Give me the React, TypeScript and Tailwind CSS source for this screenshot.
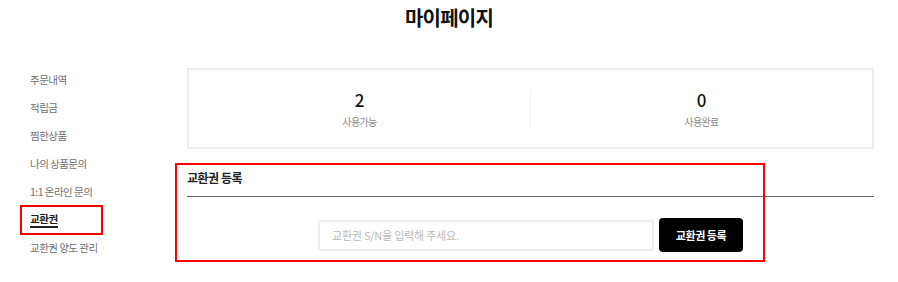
const menu = ["주문내역", "적립금", "찜한상품", "나의 상품문의", "1:1 온라인 문의", "교환권", "교환권 양도 관리"];

function StatBox({ value, label }: { value: string; label: string }) {
  return (
    <div className="flex-1 flex flex-col items-center">
      <p className="text-[17px] leading-[20px] font-medium text-[#111]">{value}</p>
      <p className="mt-[6px] text-[10px] leading-[12px] tracking-[-0.06em] text-[#888]">{label}</p>
    </div>
  );
}

export default function App() {
  return (
    <div
      className="w-[898px] h-[282px] bg-white overflow-hidden"
      style={{ fontFamily: '"Noto Sans CJK KR", "Noto Sans", sans-serif' }}
    >
      <h1 className="pt-[4px] text-center text-[20px] leading-[28px] font-bold tracking-[-0.04em] text-[#111]">
        마이페이지
      </h1>

      <div className="flex mt-[36px]">
        <aside className="w-[187px] pl-[30px] -mt-[2px]">
          <ul className="flex flex-col">
            {menu.map((m) => {
              const active = m === "교환권";
              return (
                <li key={m} className="h-[28px] flex items-center">
                  {active ? (
                    <span className="-ml-[10px] w-[83px] h-[30px] border-2 border-[#ff0000] pl-[8px] flex items-center">
                      <span className="text-[10.5px] leading-[14px] tracking-[-0.04em] font-bold text-[#222] border-b-2 border-[#222]">
                        {m}
                      </span>
                    </span>
                  ) : (
                    <span className="text-[10.5px] leading-[14px] tracking-[-0.05em] text-[#707070]">{m}</span>
                  )}
                </li>
              );
            })}
          </ul>
        </aside>

        <main className="w-[687px]">
          <div className="h-[81px] border-2 border-[#eeeeee] flex items-center">
            <StatBox value="2" label="사용가능" />
            <div className="w-px h-[37px] bg-[#f0f0f0]" />
            <StatBox value="0" label="사용완료" />
          </div>

          <section className="relative mt-[14px]">
            <div className="absolute -left-[12px] top-0 w-[590px] h-[99px] border-2 border-[#ff0000]" />
            <h2 className="pt-[7px] h-[33px] text-[12px] leading-[16px] font-bold tracking-[-0.04em] text-[#222]">
              교환권 등록
            </h2>
            <div className="h-px bg-[#666]" />
            <div className="mt-[21px] flex justify-center items-center gap-[5px]">
              <input
                className="w-[336px] h-[31px] border-2 border-[#eeeeee] rounded-[3px] px-[12px] text-[11px] tracking-[-0.02em] placeholder:text-[#bbb] outline-none"
                placeholder="교환권 S/N을 입력해 주세요."
              />
              <button className="w-[84px] h-[34px] bg-black rounded-[4px] text-white text-[11px] font-bold tracking-[-0.04em]">
                교환권 등록
              </button>
            </div>
          </section>
        </main>
      </div>
    </div>
  );
}
